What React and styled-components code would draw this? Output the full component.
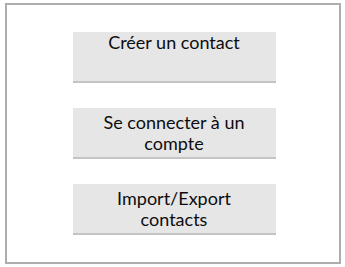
import React from 'react'
import styled, { createGlobalStyle } from 'styled-components';

const GlobalStyle = createGlobalStyle`
  body {
    margin: 0;
    background: #ffffff;
    font-family: Lato, "Open Sans", sans-serif;
  }
`

const Frame = styled.div`
  margin: 3px 0 0 5px;
  width: 336px;
  height: 261px;
  box-sizing: border-box;
  border: 2px solid #adadad;
  display: flex;
  flex-direction: column;
  align-items: center;
  padding: 27px 0 0 2px;
  gap: 25px;
`

const MenuButton = styled.button`
  width: 203px;
  height: 51px;
  box-sizing: border-box;
  background: #e6e6e6;
  border: none;
  border-bottom: 2px solid #c4c4c4;
  border-radius: 0;
  margin: 0;
  padding: 0 6px;
  display: flex;
  align-items: ${props => props.$single ? 'flex-start' : 'center'};
  justify-content: center;
  font-family: Lato, "Open Sans", sans-serif;
  font-size: 18px;
  line-height: 21px;
  color: #0d0d0d;
  text-align: center;
  cursor: pointer;
`

const Label = styled.span`
  display: block;
  max-width: 160px;
`

const actions = [
  { label: 'Créer un contact', single: true },
  { label: 'Se connecter à un compte' },
  { label: 'Import/Export contacts' },
]

const App = () => {
  return (
    <>
      <GlobalStyle />
      <Frame>
        {actions.map((a, ind) => (
          <MenuButton key={ind} $single={a.single}>
            <Label>{a.label}</Label>
          </MenuButton>
        ))}
      </Frame>
    </>
  )
}

export default App
